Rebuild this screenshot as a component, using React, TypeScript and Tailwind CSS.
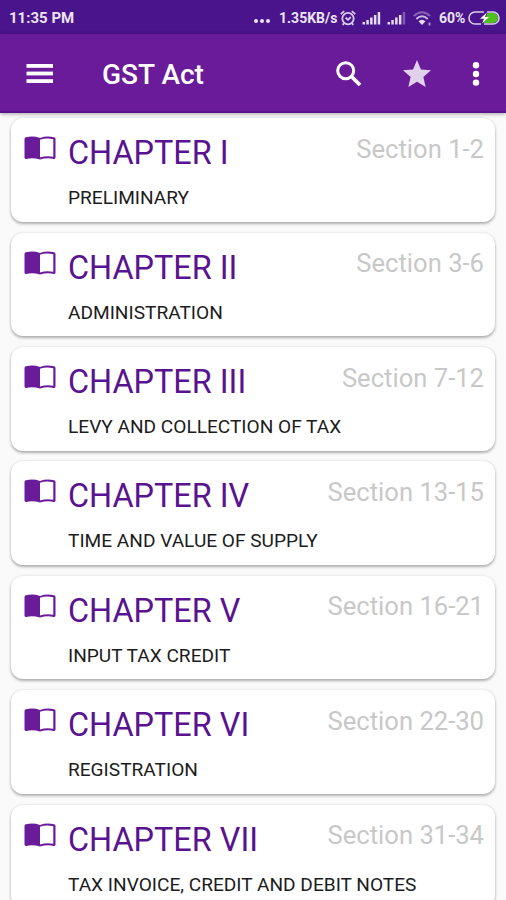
const chapters = [
  { title: "CHAPTER I", subtitle: "PRELIMINARY", sections: "Section 1-2" },
  { title: "CHAPTER II", subtitle: "ADMINISTRATION", sections: "Section 3-6" },
  { title: "CHAPTER III", subtitle: "LEVY AND COLLECTION OF TAX", sections: "Section 7-12" },
  { title: "CHAPTER IV", subtitle: "TIME AND VALUE OF SUPPLY", sections: "Section 13-15" },
  { title: "CHAPTER V", subtitle: "INPUT TAX CREDIT", sections: "Section 16-21" },
  { title: "CHAPTER VI", subtitle: "REGISTRATION", sections: "Section 22-30" },
  { title: "CHAPTER VII", subtitle: "TAX INVOICE, CREDIT AND DEBIT NOTES", sections: "Section 31-34" },
];

function BookIcon() {
  return (
    <svg className="mt-[18px] h-6 w-8 shrink-0" viewBox="0 0 32 24">
      <path
        d="M.5 3Q.5 1.600 2 1.300Q9-.6 16 1.900Q23-.6 30 1.300Q31.500 1.600 31.500 3V21.500Q31.500 23.300 29.700 22.900Q23 21.300 16 23.600Q9 21.300 2.300 22.900Q.5 23.300.5 21.500ZM16 3.700V21.500Q22.500 19.300 29.300 20.800V3.300Q22.500 1.600 16 3.700Z"
        fill="#6a1b9a"
        fillRule="evenodd"
      />
    </svg>
  );
}

function AlarmIcon() {
  return (
    <svg className="h-4 w-4" viewBox="0 0 16 16" fill="none" stroke="#d9cdf0" strokeWidth="1.8">
      <circle cx="8" cy="8.600" r="5.700" />
      <path d="M.8 4.200 4.200 1.200M15.200 4.200 11.800 1.200M5.600 7.800 8 9.800 10.800 7.200M3.800 13.300 2.800 15M12.200 13.300 13.200 15" />
    </svg>
  );
}

function SignalIcon({ weak = false }: { weak?: boolean }) {
  return (
    <svg className="h-[14px] w-[19px]" viewBox="0 0 19 14" fill="#e3daf5">
      <rect x="0.500" y="11" width="2.500" height="2.500" />
      <rect x="4.300" y="9" width="2.500" height="4.500" />
      <rect x="8.100" y="6.500" width="2.500" height="7" />
      <rect x="11.900" y="4" width="2.500" height="9.500" />
      <rect x="15.700" y="1" width="2.500" height="12.500" opacity={weak ? 0.35 : 1} />
    </svg>
  );
}

function WifiIcon() {
  return (
    <svg className="h-[15px] w-[19px]" viewBox="0 0 19 15" fill="none" stroke="#e3daf5" strokeWidth="1.800">
      <path d="M.8 5.200Q9-2.600 17.200 5.200" opacity=".4" />
      <path d="M3.300 8Q9 2.500 14.700 8" opacity=".85" />
      <path d="M5.500 10.300Q9 7.300 12.500 10.300L9 14Z" fill="#e3daf5" stroke="none" />
      <path d="M16.500 11.500V14.500" opacity=".7" />
    </svg>
  );
}

function BatteryIcon() {
  return (
    <svg className="h-[14px] w-8" viewBox="0 0 32 14">
      <path d="M19.500 2H25a5 5 0 0 1 0 10H15.500Z" fill="#4fc01c" />
      <path d="M16 1H7a6 6 0 0 0 0 12h6M19 1h6a6 6 0 0 1 0 12h-9" fill="none" stroke="#d9cdf0" strokeWidth="1.600" />
      <path d="M18.800 1.500 12 7.800H16L14 12.500 21 6H17Z" fill="#fff" />
    </svg>
  );
}

function StatusBar() {
  return (
    <div className="flex h-[34px] shrink-0 items-center bg-[#4a148c] pt-[2px] pl-[9px] pr-[6px] text-[15px] font-bold text-[#ece5f8]">
      <span className="w-[65px] whitespace-nowrap">11:35 PM</span>
      <div className="ml-auto mr-[9px] mt-[6px] flex gap-[2px]">
        {[0, 1, 2].map((dot) => (
          <i key={dot} className="h-[4px] w-[4px] rounded-full bg-[#ece5f8]" />
        ))}
      </div>
      <span className="w-[58px] whitespace-nowrap text-[14px]">1.35KB/s</span>
      <div className="ml-[3px] flex items-center">
        <AlarmIcon />
        <div className="ml-[6px] flex gap-[6px]">
          <SignalIcon />
          <SignalIcon weak />
        </div>
        <div className="ml-[7px]">
          <WifiIcon />
        </div>
      </div>
      <span className="ml-[7px] w-[27px] whitespace-nowrap text-[14px]">60%</span>
      <div className="ml-[2px]">
        <BatteryIcon />
      </div>
    </div>
  );
}

function Toolbar() {
  return (
    <header className="relative z-10 flex h-[79px] shrink-0 items-center border-b-2 border-[#5a128f] bg-[#6a1b9a] pt-[2px] pl-[26px] pr-[26px] shadow-[0_1px_4px_rgba(0,0,0,0.35)]">
      <svg className="h-[20px] w-[28px]" viewBox="0 0 28 20" fill="#fff">
        <rect x="0.500" y="0" width="26.500" height="3.800" />
        <rect x="0.500" y="7.600" width="26.500" height="3.800" />
        <rect x="0.500" y="15.200" width="26.500" height="3.800" />
      </svg>
      <h1 className="mt-[3px] ml-[48px] text-[28px] leading-none font-medium text-white">GST Act</h1>
      <svg className="ml-auto h-[26px] w-[26px]" viewBox="0 0 26 26" fill="none" stroke="#fff">
        <circle cx="9.700" cy="9.700" r="8" strokeWidth="3" />
        <path d="m15.500 15.500 8.500 8.500" strokeWidth="3.800" />
      </svg>
      <svg className="ml-[41px] h-[27px] w-[28px]" viewBox="2 2 20 19" preserveAspectRatio="none" fill="#e1d1eb">
        <path d="M12 17.270 18.180 21l-1.640-7.030L22 9.240l-7.190-.61L12 2 9.190 8.630 2 9.240l5.460 4.730L5.820 21z" />
      </svg>
      <svg className="ml-[41px] h-[24px] w-[8px]" viewBox="0 0 8 24" fill="#fff">
        <circle cx="4" cy="3.300" r="3.200" />
        <circle cx="4" cy="12" r="3.200" />
        <circle cx="4" cy="20.600" r="3.200" />
      </svg>
    </header>
  );
}

export default function App() {
  return (
    <div className="flex h-[900px] w-[506px] flex-col overflow-hidden bg-[#fafafa] font-[Roboto,sans-serif]">
      <StatusBar />
      <Toolbar />
      <main className="flex min-h-0 flex-1 flex-col gap-[10.880px] overflow-hidden px-[11px] pt-[5.300px]">
        {chapters.map((chapter) => (
          <article
            key={chapter.title}
            className="flex h-[103.500px] shrink-0 rounded-[12px] bg-white pl-[13px] pr-[11px] shadow-[0_2px_3px_rgba(0,0,0,0.28),0_0_3px_rgba(0,0,0,0.12)]"
          >
            <BookIcon />
            <div className="ml-[12px] min-w-0 flex-1">
              <div className="flex justify-between whitespace-nowrap">
                <h2 className="mt-[15px] text-[32.400px] leading-[40px] font-normal text-[#5a1390]">{chapter.title}</h2>
                <span className="mt-[14.500px] text-[25.600px] leading-[32px] text-[#c8c8c8]">{chapter.sections}</span>
              </div>
              <p className="mt-[13px] text-[19.100px] leading-[24px] whitespace-nowrap text-[#1c1c1c]">{chapter.subtitle}</p>
            </div>
          </article>
        ))}
      </main>
    </div>
  );
}
